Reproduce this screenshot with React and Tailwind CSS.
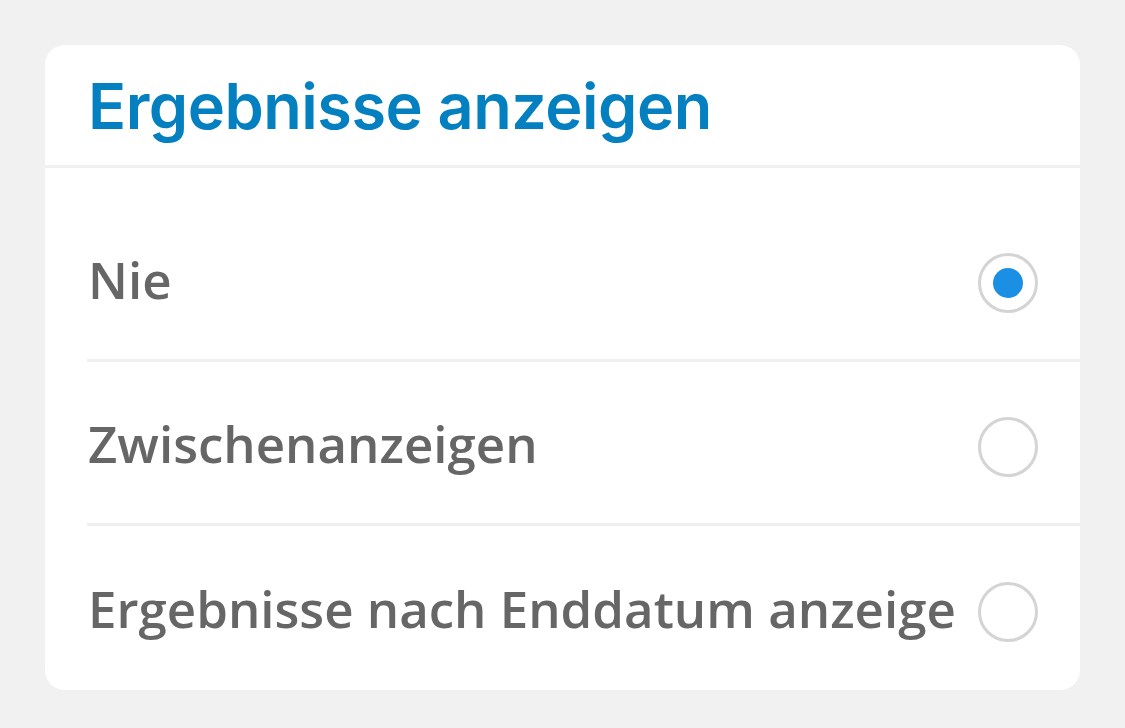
import React, { useState } from "react";

const options = ["Nie", "Zwischenanzeigen", "Ergebnisse nach Enddatum anzeigen"];

export default function App() {
  const [selected, setSelected] = useState(0);

  return (
    <div className="min-h-[728px] w-[1125px] bg-[#f1f1f1] px-[45px] pt-[45px]">
      <div className="w-[1035px] rounded-[20px] bg-white overflow-hidden">
        <div className="h-[123px] border-b-[3px] border-[#f0f0f0] pl-[43px] pt-[2px] flex items-center">
          <h1 className="font-['Inter',sans-serif] font-semibold text-[63px] leading-none tracking-[-0.5px] text-[#0480c1]">
            Ergebnisse anzeigen
          </h1>
        </div>
        <div className="pl-[42px] pt-[30px]">
          {options.map((label, i) => (
            <button
              key={i}
              onClick={() => setSelected(i)}
              className={
                "w-full h-[164px] pt-[8px] flex items-center text-left " +
                (i < options.length - 1 ? "border-b-[3px] border-[#efefef]" : "")
              }
            >
              <span className="flex-1 min-w-0 mb-[6px] pl-[1px] overflow-hidden whitespace-nowrap font-['Open_Sans',sans-serif] font-semibold text-[51px] leading-[1.4] text-[#666666]">
                {label}
              </span>
              <span className="ml-[22px] mr-[42px] w-[60px] h-[60px] shrink-0 rounded-full border-[3px] border-[#d4d4d4] flex items-center justify-center">
                {selected === i && (
                  <span className="w-[30px] h-[30px] rounded-full bg-[#1a8fe3]" />
                )}
              </span>
            </button>
          ))}
        </div>
      </div>
    </div>
  );
}
